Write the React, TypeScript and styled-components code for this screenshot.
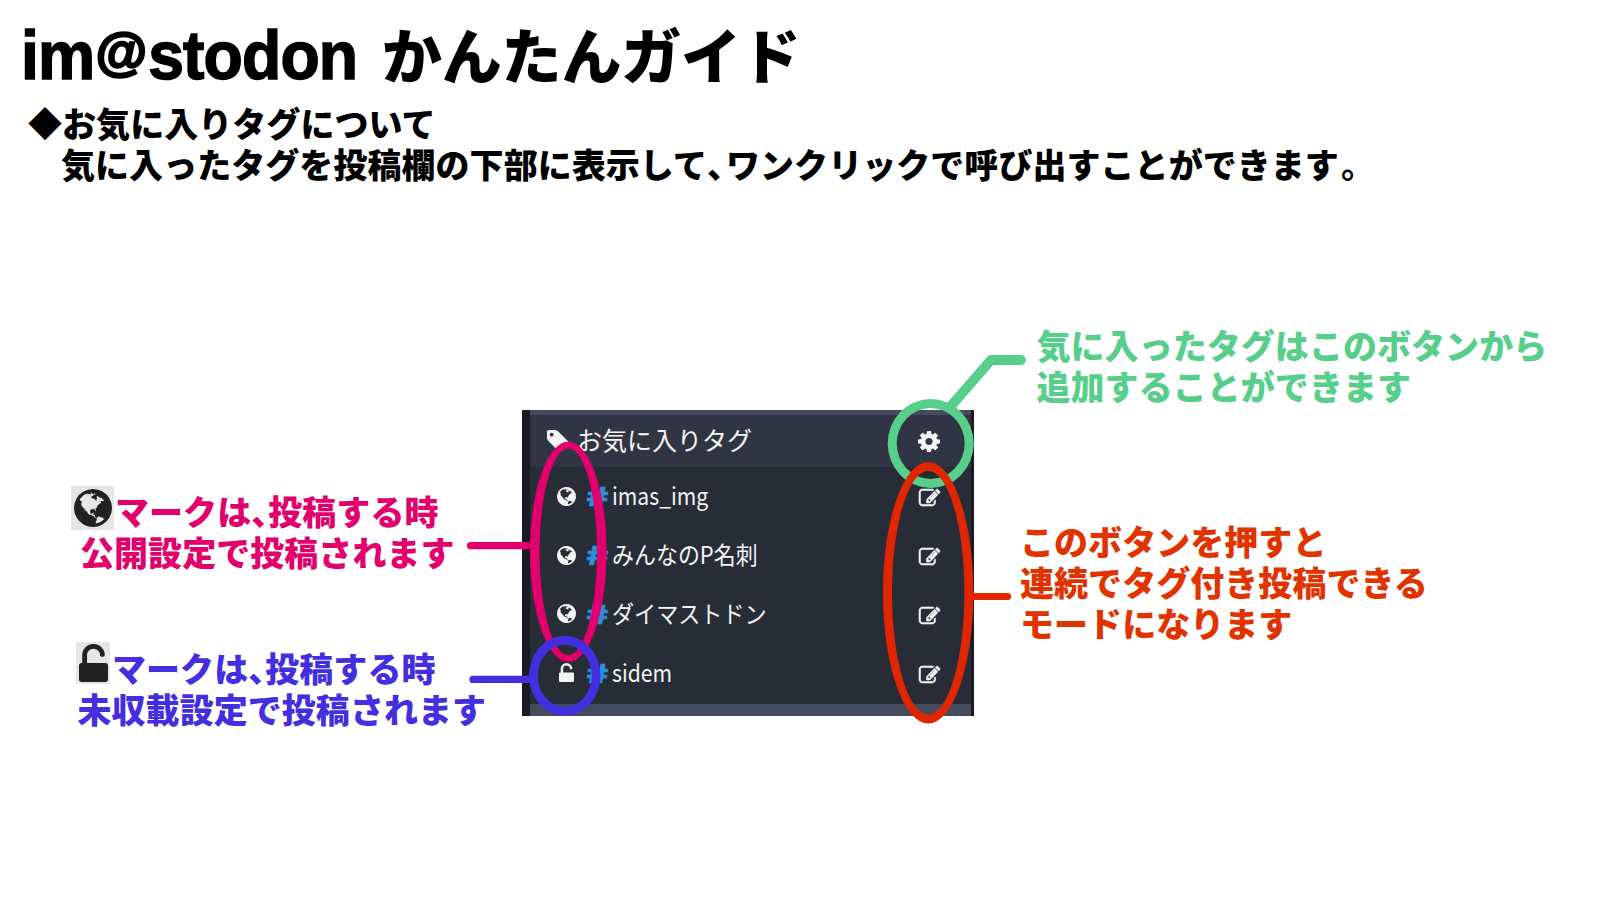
import React from "react";
import styled, { createGlobalStyle } from "styled-components";

const GlobalStyle = createGlobalStyle`
  body { margin: 0; background: #fff; }
`;

const jp = `"Noto Sans CJK JP", sans-serif`;

const color = {
  pink: "#e1006c",
  purple: "#432ee0",
  green: "#57cf8a",
  red: "#e02600",
  redText: "#e13300",
};

const glyphs = {
  tag: "M576 448q0-53-37.5-90.5t-90.5-37.5-90.5 37.5-37.5 90.5 37.5 90.5 90.5 37.5 90.5-37.5 37.5-90.5zm1067 576q0 53-37 90l-491 492q-39 37-91 37-53 0-90-37l-715-716q-38-37-64.5-101t-26.5-117v-416q0-52 38-90t90-38h416q53 0 117 26.5t102 64.5l715 714q37 39 37 91z",
  unlock:
    "M1376 768q40 0 68 28t28 68v576q0 40-28 68t-68 28h-960q-40 0-68-28t-28-68v-576q0-40 28-68t68-28h32v-320q0-185 131.5-316.5t316.5-131.5 316.5 131.5 131.5 316.5q0 26-19 45t-45 19h-64q-26 0-45-19t-19-45q0-106-75-181t-181-75-181 75-75 181v320h736z",
  cog: "M1152 896q0-106-75-181t-181-75-181 75-75 181 75 181 181 75 181-75 75-181zm512-109v222q0 12-8 23t-20 13l-185 28q-19 54-39 91 35 50 107 138 10 12 10 25t-9 23q-27 37-99 108t-94 71q-12 0-26-9l-138-108q-44 23-91 38-16 136-29 186-7 28-36 28h-222q-14 0-24.5-8.5t-11.5-21.5l-28-184q-49-16-90-37l-141 107q-10 9-25 9-14 0-25-11-126-114-165-168-7-10-7-23 0-12 8-23 15-21 51-66.5t54-70.5q-27-50-41-99l-183-27q-13-2-21-12.5t-8-23.5v-222q0-12 8-23t19-13l186-28q14-46 39-92-40-57-107-138-10-12-10-24 0-10 9-23 26-36 98.5-107.5t94.5-71.5q13 0 26 10l138 107q44-23 91-38 16-136 29-186 7-28 36-28h222q14 0 24.5 8.5t11.5 21.5l28 184q49 16 90 37l142-107q9-9 24-9 13 0 25 10 129 119 165 170 7 8 7 22 0 12-8 23-15 21-51 66.5t-54 70.5q26 50 41 98l183 28q13 2 21 12.5t8 23.5z",
  edit: "M888 1184l116-116-152-152-116 116v56h96v96h56zm440-720q-16-16-33 1l-350 350q-17 17-1 33t33-1l350-350q17-17 1-33zm80 594v190q0 119-84.5 203.5t-203.5 84.5h-832q-119 0-203.5-84.5t-84.5-203.5v-832q0-119 84.5-203.5t203.5-84.5h832q63 0 117 25 15 7 18 23 3 17-9 29l-49 49q-14 14-32 8-23-6-45-6h-832q-66 0-113 47t-47 113v832q0 66 47 113t113 47h832q66 0 113-47t47-113v-126q0-13 9-22l64-64q15-15 35-7t20 29zm-96-738l288 288-672 672h-288v-288zm444 132l-92 92-288-288 92-92q28-28 68-28t68 28l152 152q28 28 28 68t-28 68z",
  globe:
    "M768 128q209 0 385.5 103t279.5 279.5 103 385.5-103 385.5-279.5 279.5-385.5 103-385.5-103-279.5-279.5-103-385.5 103-385.5 279.5-279.5 385.5-103zm274 521q-2 1-9.5 9.5t-13.5 9.5q2 0 4.5-5t5-11 3.5-7q6-7 22-15 14-6 52-12 34-8 51 11-2-2 9.5-13t14.5-12q3-2 15-4.5t15-7.5l2-22q-12 1-17.5-7t-6.5-21q0 2-6 8 0-7-4.5-8t-11.5 1-9 1q-10-3-15-7.5t-8-16.5-4-15q-2-5-9.5-10.5t-9.5-10.5q-1-2-2.5-5.5t-3-6.5-4-5.5-5.5-2.5-7 5-7.5 10-4.5 5q-3-2-6-1.5t-4.5 1-4.5 3-5 3.5q-3 2-8.5 3t-8.5 2q15-5-1-11-10-4-16-3 9-4 7.5-12t-8.5-14h5q-1-4-8.5-8.5t-17.5-8.5-13-6q-8-5-34-9.5t-33-.5q-5 6-4.5 10.5t4 14 3.5 12.5q1 6-5.5 13t-6.5 12q0 7 14 15.5t10 21.5q-3 8-16 16t-16 12q-5 8-1.5 18.5t10.5 16.5q2 2 1.5 4t-3.5 4.5-5.5 4-6.5 3.5l-3 2q-11 5-20.5-6t-13.5-26q-7-25-16-30-23-8-29 1-5-13-41-26-25-9-58-4 6-1 0-15-7-15-19-12 3-6 4-17.5t1-13.5q3-13 12-23 1-1 7-8.5t9.5-13.5.5-6q35 4 50-11 5-5 11.5-17t10.5-17q9-6 14-5.5t14.5 5.5 14.5 5q14 1 15.5-11t-7.5-20q12 1 3-17-4-7-8-9-12-4-27 5-8 4 2 8-1-1-9.5 10.5t-16.5 17.5-16-5q-1-1-5.5-13.5t-9.5-13.5q-8 0-16 15 3-8-11-15t-24-8q19-12-8-27-7-4-20.5-5t-19.5 4q-5 7-5.5 11.5t5 8 10.5 5.5 11.5 4 8.5 3q14 10 8 14-2 1-8.5 3.5t-11.5 4.5-6 4q-3 4 0 14t-2 14q-5-5-9-17.5t-7-16.5q7 9-25 6l-10-1q-4 0-16 2t-20.5 1-13.5-8q-4-8 0-20 1-4 4-2-4-3-11-9.5t-10-8.5q-46 15-94 41 6 1 12-1 5-2 13-6.5t10-5.5q34-14 42-7l5-5q14 16 20 25-7-4-30-1-20 6-22 12 7 12 5 18-4-3-11.5-10t-14.5-11-15-5q-16 0-22 1-146 80-235 222 7 7 12 8 4 1 5 9t2.5 11 11.5-3q9 8 3 19 1-1 44 27 19 17 21 21 3 11-10 18-1-2-9-9t-9-4q-3 5 .5 18.5t10.5 12.5q-7 0-9.5 16t-2.5 35.5-1 23.5l2 1q-3 12 5.5 34.5t21.5 19.5q-13 3 20 43 6 8 8 9 3 2 12 7.5t15 10 10 10.5q4 5 10 22.5t14 23.5q-2 6 9.5 20t10.5 23q-1 0-2.5 1t-2.5 1q3 7 15.5 14t15.5 13q1 3 2 10t3 11 8 2q2-20-24-62-15-25-17-29-3-5-5.5-15.5t-4.5-14.5q2 0 6 1.5t8.5 3.5 7.5 4 2 3q-3 7 2 17.5t12 18.5 17 19 12 13q6 6 14 19.5t0 13.5q9 0 20 10.5t17 19.5q5 8 8 26t5 24q2 7 8.5 13.5t12.5 9.5l16 8 13 7q5 2 18.5 10.5t21.5 11.5q10 4 16 4t14.5-2.5 13.5-3.5q15-2 29 15t21 21q36 19 55 11-2 1 .5 7.5t8 15.5 9 14.5 5.5 8.5q5 6 18 15t18 15q6-4 7-9-3 8 7 20t18 10q14-3 14-32-31 15-49-18 0-1-2.5-5.5t-4-8.5-2.5-8.5 0-7.5 5-3q9 0 10-3.5t-2-12.5-4-13q-1-8-11-20t-12-15q-5 9-16 8t-16-9q0 1-1.5 5.5t-1.5 6.5q-13 0-15-1 1-3 2.5-17.5t3.5-22.5q1-4 5.5-12t7.5-14.5 4-12.5-4.5-9.5-17.5-2.5q-19 1-26 20-1 3-3 10.5t-5 11.5-9 7q-7 3-24 2t-24-5q-13-8-22.5-29t-9.5-37q0-10 2.5-26.5t3-25-5.5-24.5q3-2 9-9.5t10-10.5q2-1 4.5-1.5t4.5 0 4-1.5 3-6q-1-1-4-3-3-3-4-3 7 3 28.5-1.5t27.5 1.5q15 11 22-2 0-1-2.5-9.5t-.5-13.5q5 27 29 9 3 3 15.5 5t17.5 5q3 2 7 5.5t5.5 4.5 5-.5 8.5-6.5q10 14 12 24 11 40 19 44 7 3 11 2t4.5-9.5 0-14-1.5-12.5l-1-8v-18l-1-8q-15-3-18.5-12t1.5-18.5 15-18.5q1-1 8-3.5t15.5-6.5 12.5-8q21-19 15-35 7 0 11-9-1 0-5-3t-7.5-5-4.5-2q9-5 2-16 5-3 7.5-11t7.5-10q9 12 21 2 8-8 1-16 5-7 20.5-10.5t18.5-9.5q7 2 8-2t1-12 3-12q4-5 15-9t13-5l17-11q3-4 0-4 18 2 31-11 10-11-6-20 3-6-3-9.5t-15-5.5q3-1 11.5-.5t10.5-1.5q15-10-7-16-17-5-43 12zm-163 877q206-36 351-189-3-3-12.5-4.5t-12.5-3.5q-18-7-24-8 1-7-2.5-13t-8-9-12.5-8-11-7q-2-2-7-6t-7-5.5-7.5-4.5-8.5-2-10 1l-3 1q-3 1-5.5 2.5t-5.5 3-4 3 0 2.5q-21-17-36-22-5-1-11-5.5t-10.5-7-10-1.5-11.5 7q-5 5-6 15t-2 13q-7-5 0-17.5t2-18.5q-3-6-10.5-4.5t-12 4.5-11.5 8.5-9 6.5-8.5 5.5-8.5 7.5q-3 4-6 12t-5 11q-2-4-11.5-6.5t-9.5-5.5q2 10 4 35t5 38q7 31-12 48-27 25-29 40-4 22 12 26 0 7-8 20.5t-7 21.5q0 6 2 16z",
};

/* Ink bounds of every glyph: x, y, width, height */
const bounds: Record<keyof typeof glyphs, string> = {
  tag: "128 128 1515 1515",
  unlock: "320 0 1152 1536",
  cog: "128 128 1536 1536",
  edit: "0 128 1784 1408",
  globe: "0 128 1536 1536",
};

const IconSvg = styled.svg<{ $bold?: number }>`
  display: block;
  flex: none;
  fill: currentColor;
  stroke: currentColor;
  stroke-width: ${(p) => p.$bold ?? 0};
  overflow: visible;
`;

function Icon({ name, w, h, bold }: { name: keyof typeof glyphs; w: number; h: number; bold?: number }) {
  return (
    <IconSvg $bold={bold} viewBox={bounds[name]} width={w} height={h} preserveAspectRatio="none">
      <path d={glyphs[name]} />
    </IconSvg>
  );
}

const Page = styled.main`
  position: relative;
  width: 1600px;
  height: 900px;
  overflow: hidden;
  background: #fff;
  color: #000;
  font-family: ${jp};
  white-space: nowrap;
`;

const Header = styled.header`
  display: flex;
  flex-direction: column;
  padding: 8px 0 0 28px;
`;

const Title = styled.h1`
  display: flex;
  align-items: baseline;
  margin: 0 0 4px -7px;
  height: 90px;
  line-height: 90px;
  font-size: 60px;
  font-weight: 900;
`;

const TitleLatin = styled.span`
  width: 361px;
  font-family: "Liberation Sans", sans-serif;
  font-size: 68px;
  font-weight: 700;
  letter-spacing: -0.9px;
  -webkit-text-stroke: 1.5px #000;
  transform: scaleX(0.945);
  transform-origin: 0 50%;
`;

const AtSign = styled.span`
  display: inline-block;
  width: 56px;
  margin: 0 0 0 1px;
  font-size: 52px;
  line-height: 0;
  vertical-align: 10px;
  -webkit-text-stroke: 2.4px #000;
  transform: scaleX(1.07);
  transform-origin: 0 50%;
`;

const TitleKana = styled.span`
  letter-spacing: -0.2px;
`;

const Line = styled.div<{ $indent?: number }>`
  padding-left: ${(p) => p.$indent ?? 0}px;
  height: 41px;
  line-height: 41px;
  font-size: 34px;
  font-weight: 900;
  letter-spacing: 0.05px;
`;

const Comma = styled.span<{ $gap?: number }>`
  font-feature-settings: "halt" 1;
  margin-right: ${(p) => p.$gap ?? 0}px;
`;

const FullStop = styled.span`
  margin-left: 2px;
  font-weight: 700;
`;

const Panel = styled.section`
  position: absolute;
  left: 522px;
  top: 410px;
  box-sizing: border-box;
  width: 452px;
  height: 305.5px;
  display: flex;
  flex-direction: column;
  border-left: 8px solid #191b22;
  border-right: 3px solid #191b22;
  background: #282c37;
  color: #f4f4f4;
`;

const PanelEdge = styled.div<{ $h: number }>`
  flex: none;
  height: ${(p) => p.$h}px;
  background: #444b5d;
`;

const PanelHeader = styled.div`
  flex: none;
  box-sizing: border-box;
  display: flex;
  align-items: center;
  height: 52px;
  padding: 0 31px 0 17px;
  background: #313543;
`;

const PanelTitle = styled.span`
  flex: 1;
  margin-left: 8px;
  padding-bottom: 4px;
  font-size: 25px;
  line-height: 46px;
  font-weight: 400;
`;

const TagList = styled.ul`
  flex: 1;
  margin: 0;
  padding: 0;
  list-style: none;
`;

const TagRow = styled.li`
  box-sizing: border-box;
  display: flex;
  align-items: center;
  height: 58.8px;
  padding: 0 31px 0 27px;
`;

const Visibility = styled.span`
  display: flex;
  justify-content: center;
  width: 19px;
`;

const Hash = styled.span`
  width: 26px;
  margin-left: 10px;
  padding-bottom: 2px;
  color: #2b90d9;
  font-size: 25px;
  line-height: 48px;
  font-weight: 900;
  -webkit-text-stroke: 0.7px #2b90d9;
  transform: scaleX(1.5);
  transform-origin: 0 50%;
`;

const TagName = styled.span<{ $scale: number }>`
  flex: 1;
  padding-bottom: 2px;
  font-size: 24px;
  font-weight: 400;
  line-height: 48px;
  transform: scaleX(${(p) => p.$scale});
  transform-origin: 0 50%;
`;

const EditSlot = styled.span`
  padding-top: 3px;
`;

const Note = styled.div<{ $x: number; $y: number; $color: string }>`
  position: absolute;
  left: ${(p) => p.$x}px;
  top: ${(p) => p.$y}px;
  color: ${(p) => p.$color};
`;

const NoteHead = styled.div`
  display: flex;
  align-items: flex-start;
`;

const Chip = styled.span<{ $w: number; $h: number; $rise: number }>`
  display: flex;
  align-items: center;
  justify-content: center;
  width: ${(p) => p.$w}px;
  height: ${(p) => p.$h}px;
  margin-top: ${(p) => -p.$rise}px;
  margin-bottom: -20px;
  background: #e6e6e6;
  color: #222;
`;

const Marks = styled.svg`
  position: absolute;
  left: 0;
  top: 0;
`;

type RingProps = { cx: number; cy: number; rx: number; ry: number; tx: number; ty: number; fill: string };

/* Elliptic ring whose thickness differs between its sides (tx) and its ends (ty) */
function Ring({ cx, cy, rx, ry, tx, ty, fill }: RingProps) {
  const oval = (a: number, b: number) =>
    `M${cx - a} ${cy}a${a} ${b} 0 1 0 ${2 * a} 0a${a} ${b} 0 1 0 ${-2 * a} 0z`;
  return <path fill={fill} fillRule="evenodd" d={oval(rx, ry) + oval(rx - tx, ry - ty)} />;
}

const tags: { name: string; icon: "globe" | "unlock"; scale: number }[] = [
  { name: "imas_img", icon: "globe", scale: 0.88 },
  { name: "みんなのP名刺", icon: "globe", scale: 0.915 },
  { name: "ダイマストドン", icon: "globe", scale: 0.92 },
  { name: "sidem", icon: "unlock", scale: 0.88 },
];

export default function App() {
  return (
    <Page>
      <GlobalStyle />
      <Header>
        <Title>
          <TitleLatin>
            im<AtSign>@</AtSign>stodon
          </TitleLatin>
          <TitleKana>かんたんガイド</TitleKana>
        </Title>
        <Line>◆お気に入りタグについて</Line>
        <Line $indent={33}>
          気に入ったタグを投稿欄の下部に表示して<Comma $gap={2}>、</Comma>ワンクリックで呼び出すことができます
          <FullStop>。</FullStop>
        </Line>
      </Header>

      <Panel>
        <PanelEdge $h={5} />
        <PanelHeader>
          <Icon name="tag" w={22} h={22} />
          <PanelTitle>お気に入りタグ</PanelTitle>
          <Icon name="cog" w={22} h={21} />
        </PanelHeader>
        <TagList>
          {tags.map((t) => (
            <TagRow key={t.name}>
              <Visibility>
                {t.icon === "globe" ? <Icon name="globe" w={19} h={19} /> : <Icon name="unlock" w={15} h={19} />}
              </Visibility>
              <Hash>#</Hash>
              <TagName $scale={t.scale}>{t.name}</TagName>
              <EditSlot>
                <Icon name="edit" w={21} h={17} bold={50} />
              </EditSlot>
            </TagRow>
          ))}
        </TagList>
        <PanelEdge $h={12} />
      </Panel>

      <Note $x={71} $y={489.5} $color={color.pink}>
        <NoteHead>
          <Chip $w={43} $h={44} $rise={3.5}>
            <Icon name="globe" w={38} h={38} />
          </Chip>
          <Line $indent={1}>
            マークは<Comma>、</Comma>投稿する時
          </Line>
        </NoteHead>
        <Line $indent={9}>公開設定で投稿されます</Line>
      </Note>

      <Note $x={76} $y={647} $color={color.purple}>
        <NoteHead>
          <Chip $w={34} $h={42} $rise={5}>
            <Icon name="unlock" w={29} h={38} />
          </Chip>
          <Line $indent={2}>
            マークは<Comma>、</Comma>投稿する時
          </Line>
        </NoteHead>
        <Line $indent={1.5}>未収載設定で投稿されます</Line>
      </Note>

      <Note $x={1036.5} $y={324} $color={color.green}>
        <Line>気に入ったタグはこのボタンから</Line>
        <Line>追加することができます</Line>
      </Note>

      <Note $x={1020} $y={520} $color={color.redText}>
        <Line>このボタンを押すと</Line>
        <Line>連続でタグ付き投稿できる</Line>
        <Line>モードになります</Line>
      </Note>

      <Marks width="1600" height="900" viewBox="0 0 1600 900" fill="none" strokeLinecap="round">
        <path d="M470.5 545.6H527" stroke={color.pink} strokeWidth="7.2" />
        <Ring cx={568.3} cy={551.8} rx={38.3} ry={110.2} tx={9.6} ty={7} fill={color.pink} />
        <path d="M473 679.4H534" stroke={color.purple} strokeWidth="7.2" />
        <Ring cx={564.8} cy={675.8} rx={35.8} ry={40} tx={8.8} ty={9} fill={color.purple} />
        <path d="M951 406L991 360H1021" stroke={color.green} strokeWidth="9.8" strokeLinejoin="round" />
        <Ring cx={930.7} cy={443.5} rx={43} ry={44.5} tx={9} ty={9} fill={color.green} />
        <path d="M970 596.5H1007.5" stroke={color.red} strokeWidth="7.2" />
        <Ring cx={928.2} cy={592.7} rx={45.2} ry={130.8} tx={9} ty={9} fill={color.red} />
      </Marks>
    </Page>
  );
}
